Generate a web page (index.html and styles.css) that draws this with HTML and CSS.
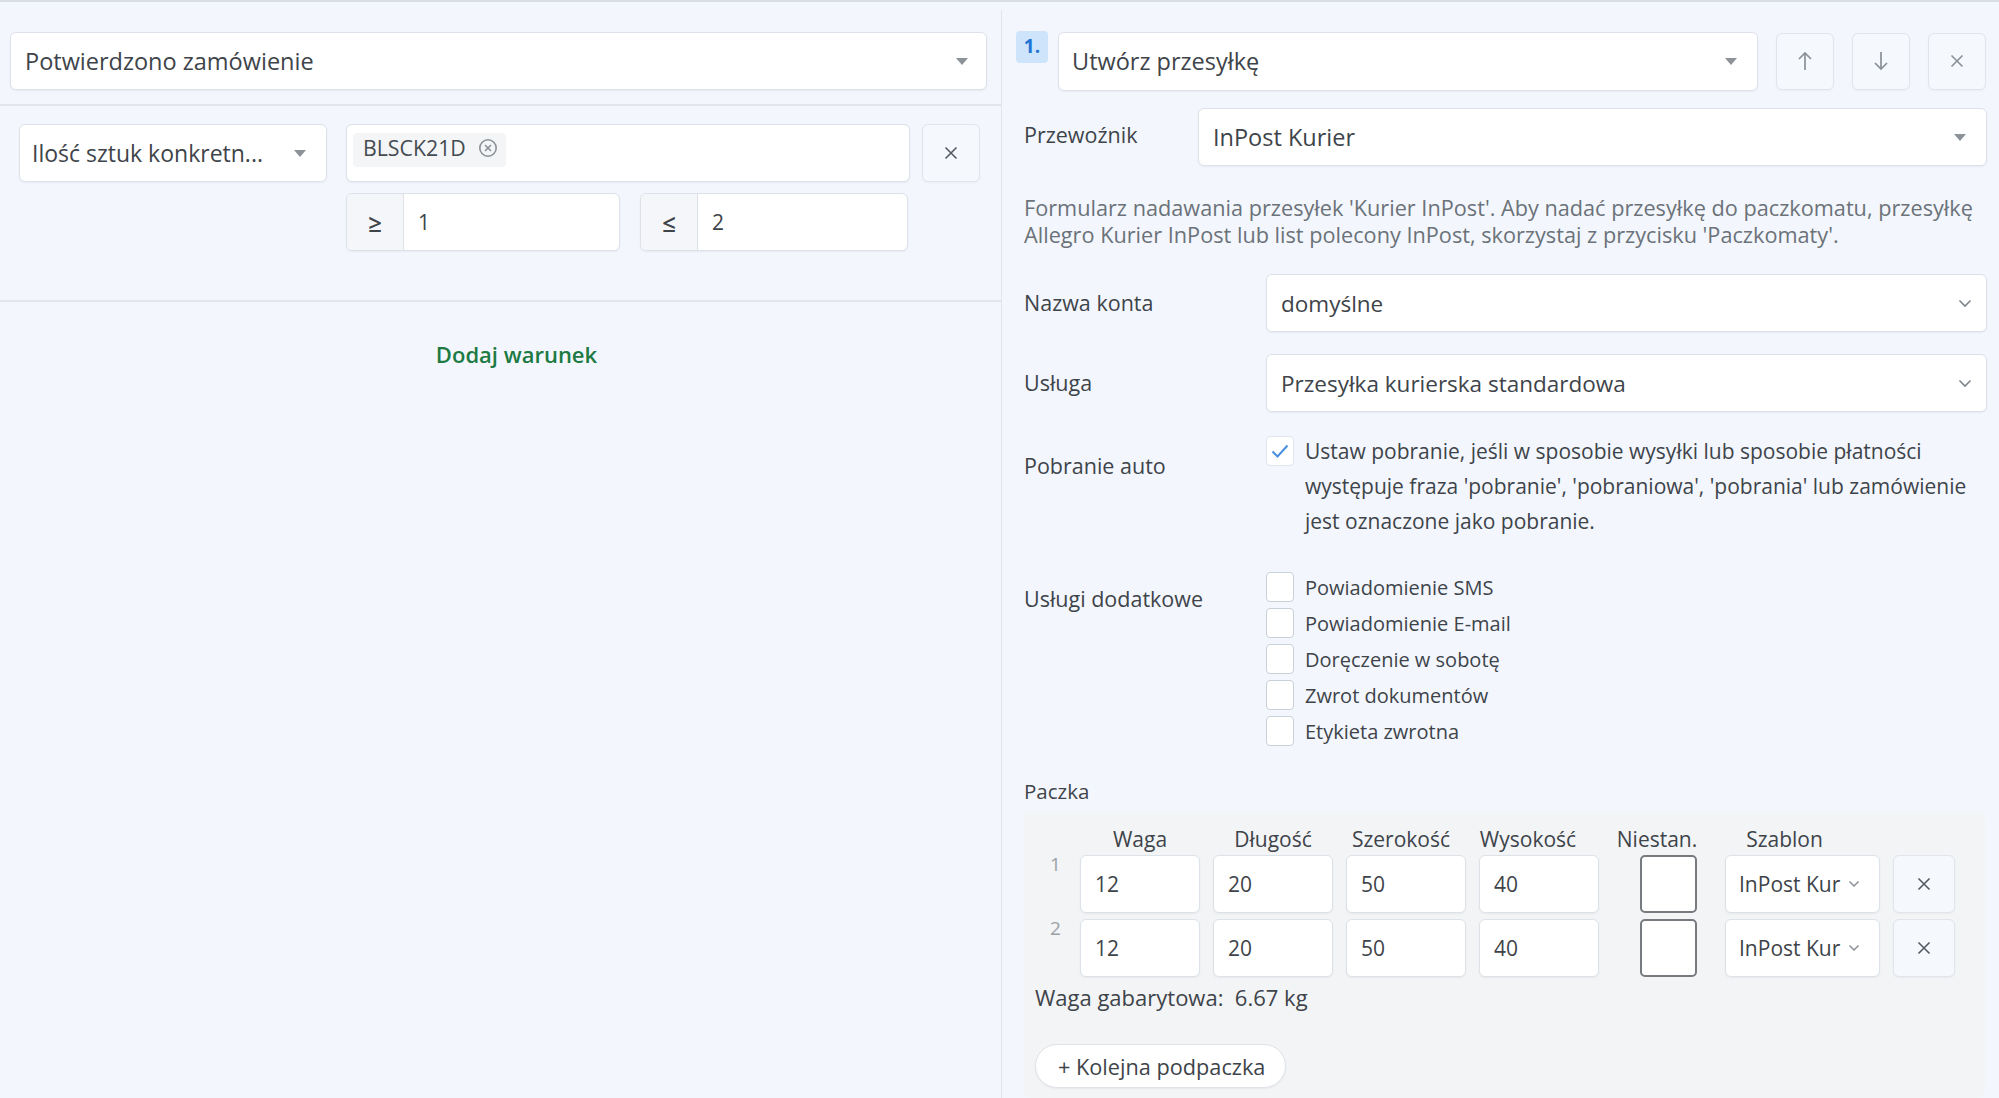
FILE: index.html
```html
<!DOCTYPE html>
<html lang="pl">
<head>
  <meta charset="UTF-8">
  <title>Automatyzacja</title>
  <link rel="stylesheet" href="styles.css">
</head>
<body>
<div class="page">

  <!-- Warunki -->
  <section class="conditions">
    <div class="trigger">
      <div class="select select-lg">
        <span>Potwierdzono zamówienie</span>
        <svg class="caret" width="12" height="7" viewBox="0 0 12 7"><path d="M0 0h12L6 7z"/></svg>
      </div>
    </div>

    <div class="condition">
      <div class="cond-row">
        <div class="select cond-type">
          <span>Ilość sztuk konkretn...</span>
          <svg class="caret" width="12" height="7" viewBox="0 0 12 7"><path d="M0 0h12L6 7z"/></svg>
        </div>
        <div class="tag-input">
          <span class="tag">BLSCK21D
            <svg width="20" height="20" viewBox="0 0 20 20" fill="none" stroke="#8a9097" stroke-width="1.6"><circle cx="10" cy="10" r="8.2"/><path d="M7 7l6 6M13 7l-6 6"/></svg>
          </span>
        </div>
        <button class="icon-btn cond-remove">
          <svg width="14" height="14" viewBox="0 0 14 14" fill="none" stroke="#555b61" stroke-width="1.6"><path d="M1.5 1.5l11 11M12.5 1.5l-11 11"/></svg>
        </button>
      </div>
      <div class="range-row">
        <div class="input-group range-min"><span class="addon">≥</span><span class="value">1</span></div>
        <div class="input-group range-max"><span class="addon">≤</span><span class="value">2</span></div>
      </div>
    </div>

    <div class="add-cond"><a href="#">Dodaj warunek</a></div>
  </section>

  <!-- Akcje -->
  <section class="actions">
    <div class="action-head">
      <span class="step">1.</span>
      <div class="select select-lg action-type">
        <span>Utwórz przesyłkę</span>
        <svg class="caret" width="12" height="7" viewBox="0 0 12 7"><path d="M0 0h12L6 7z"/></svg>
      </div>
      <button class="icon-btn head-btn">
        <svg width="16" height="20" viewBox="0 0 16 20" fill="none" stroke="#8a9097" stroke-width="1.7"><path d="M8 19V2M2 8l6-6 6 6"/></svg>
      </button>
      <button class="icon-btn head-btn">
        <svg width="16" height="20" viewBox="0 0 16 20" fill="none" stroke="#8a9097" stroke-width="1.7"><path d="M8 1v17M2 12l6 6 6-6"/></svg>
      </button>
      <button class="icon-btn head-btn">
        <svg width="14" height="14" viewBox="0 0 14 14" fill="none" stroke="#8a9097" stroke-width="1.6"><path d="M1.5 1.5l11 11M12.5 1.5l-11 11"/></svg>
      </button>
    </div>

    <div class="action-body">
      <div class="form-row carrier-row">
        <label>Przewoźnik</label>
        <div class="select select-lg">
          <span>InPost Kurier</span>
          <svg class="caret" width="12" height="7" viewBox="0 0 12 7"><path d="M0 0h12L6 7z"/></svg>
        </div>
      </div>

      <p class="hint">Formularz nadawania przesyłek 'Kurier InPost'. Aby nadać przesyłkę do paczkomatu, przesyłkę Allegro Kurier InPost lub list polecony InPost, skorzystaj z przycisku 'Paczkomaty'.</p>

      <div class="form-row account-row">
        <label>Nazwa konta</label>
        <div class="select">
          <span>domyślne</span>
          <svg class="chevron" width="14" height="9" viewBox="0 0 14 9" fill="none" stroke="#7d848b" stroke-width="1.6"><path d="M1.5 1.5l5.5 5.5 5.5-5.5"/></svg>
        </div>
      </div>

      <div class="form-row">
        <label>Usługa</label>
        <div class="select">
          <span>Przesyłka kurierska standardowa</span>
          <svg class="chevron" width="14" height="9" viewBox="0 0 14 9" fill="none" stroke="#7d848b" stroke-width="1.6"><path d="M1.5 1.5l5.5 5.5 5.5-5.5"/></svg>
        </div>
      </div>

      <div class="form-row top cod-row">
        <label>Pobranie auto</label>
        <div class="check-item">
          <span class="checkbox checked">
            <svg width="18" height="14" viewBox="0 0 18 14" fill="none" stroke="#4a8fe0" stroke-width="2"><path d="M1.5 7.5l5 5L16.5 1.5"/></svg>
          </span>
          <span class="check-text">Ustaw pobranie, jeśli w sposobie wysyłki lub sposobie płatności występuje fraza 'pobranie', 'pobraniowa', 'pobrania' lub zamówienie jest oznaczone jako pobranie.</span>
        </div>
      </div>

      <div class="form-row top extras">
        <label>Usługi dodatkowe</label>
        <div class="check-list">
          <div class="check-item"><span class="checkbox"></span><span class="check-text">Powiadomienie SMS</span></div>
          <div class="check-item"><span class="checkbox"></span><span class="check-text">Powiadomienie E-mail</span></div>
          <div class="check-item"><span class="checkbox"></span><span class="check-text">Doręczenie w sobotę</span></div>
          <div class="check-item"><span class="checkbox"></span><span class="check-text">Zwrot dokumentów</span></div>
          <div class="check-item"><span class="checkbox"></span><span class="check-text">Etykieta zwrotna</span></div>
        </div>
      </div>

      <div class="parcel-label">Paczka</div>
      <div class="parcel-box">
        <div class="parcel-grid">
          <span></span>
          <span class="th">Waga</span>
          <span class="th">Długość</span>
          <span class="th th-w">Szerokość</span>
          <span class="th th-h">Wysokość</span>
          <span class="th th-w">Niestan.</span>
          <span class="th th-tpl">Szablon</span>
          <span></span>

          <span class="nr">1</span>
          <span class="cell">12</span>
          <span class="cell">20</span>
          <span class="cell">50</span>
          <span class="cell">40</span>
          <span class="big-check"></span>
          <span class="cell tpl">InPost Kur<svg width="12" height="8" viewBox="0 0 12 8" fill="none" stroke="#8a9097" stroke-width="1.5"><path d="M1.5 1.5l4.5 4.5 4.5-4.5"/></svg></span>
          <button class="icon-btn row-remove"><svg width="14" height="14" viewBox="0 0 14 14" fill="none" stroke="#555b61" stroke-width="1.6"><path d="M1.5 1.5l11 11M12.5 1.5l-11 11"/></svg></button>

          <span class="nr">2</span>
          <span class="cell">12</span>
          <span class="cell">20</span>
          <span class="cell">50</span>
          <span class="cell">40</span>
          <span class="big-check"></span>
          <span class="cell tpl">InPost Kur<svg width="12" height="8" viewBox="0 0 12 8" fill="none" stroke="#8a9097" stroke-width="1.5"><path d="M1.5 1.5l4.5 4.5 4.5-4.5"/></svg></span>
          <button class="icon-btn row-remove"><svg width="14" height="14" viewBox="0 0 14 14" fill="none" stroke="#555b61" stroke-width="1.6"><path d="M1.5 1.5l11 11M12.5 1.5l-11 11"/></svg></button>
        </div>
        <div class="dim-weight">Waga gabarytowa:&nbsp; 6.67 kg</div>
        <button class="add-parcel">+ Kolejna podpaczka</button>
      </div>
    </div>
  </section>
</div>
</body>
</html>
```

FILE: styles.css
```css
body {
  margin: 0;
  font-family: "Open Sans", "Liberation Sans", sans-serif;
  color: #3e444a;
  background-color: #f3f7fd;
}

.page {
  display: grid;
  grid-template-columns: 1002px 1fr;
  min-height: 100vh;
  border-top: 2px solid #d9dee6;
  box-sizing: border-box;
}

/* shared controls */
.select {
  display: flex;
  align-items: center;
  justify-content: space-between;
  height: 58px;
  padding: 0 18px 0 14px;
  background-color: white;
  border: 1px solid #dde2e9;
  border-radius: 6px;
  box-shadow: 0 1px 2px rgba(0, 0, 0, 0.05);
  box-sizing: border-box;
  font-size: 22.5px;
  color: #3e444a;
}

.select-lg {
  font-size: 23.5px;
}

.caret {
  fill: #8c9298;
  flex-shrink: 0;
}

.chevron {
  flex-shrink: 0;
  margin-right: -4px;
}

.icon-btn {
  display: flex;
  align-items: center;
  justify-content: center;
  padding: 0;
  background-color: #f5f8fc;
  border: 1px solid #e1e5eb;
  border-radius: 6px;
  box-shadow: 0 1px 2px rgba(0, 0, 0, 0.04);
  cursor: pointer;
  box-sizing: border-box;
}

/* left column */
.conditions {
  border-right: 1px solid #e1e5eb;
  margin-top: 8px;
}

.trigger {
  padding: 22px 14px 14px 10px;
  border-bottom: 2px solid #e2e6ec;
}

.condition {
  padding: 18px 0 49px 19px;
  border-bottom: 2px solid #e2e6ec;
}

.cond-row {
  display: flex;
  height: 58px;
}

.cond-type {
  width: 308px;
  padding-left: 12px;
  padding-right: 20px;
  font-size: 23px;
}

.tag-input {
  width: 564px;
  margin-left: 19px;
  padding: 8px 6px;
  background-color: white;
  border: 1px solid #dde2e9;
  border-radius: 6px;
  box-shadow: 0 1px 2px rgba(0, 0, 0, 0.05);
  box-sizing: border-box;
}

.tag {
  display: inline-flex;
  align-items: center;
  gap: 12px;
  padding: 0 8px 5px 10px;
  background-color: #f4f5f7;
  border-radius: 4px;
  font-size: 21.3px;
  color: #454b51;
}

.cond-remove {
  width: 58px;
  margin-left: 12px;
}

.range-row {
  display: flex;
  gap: 20px;
  margin-top: 11px;
  padding-left: 327px;
}

.input-group {
  display: flex;
  height: 58px;
  background-color: white;
  border: 1px solid #dde2e9;
  border-radius: 6px;
  box-shadow: 0 1px 2px rgba(0, 0, 0, 0.05);
  box-sizing: border-box;
  overflow: hidden;
  font-size: 21px;
}

.range-min { width: 274px; }
.range-max { width: 268px; }

.addon {
  display: flex;
  align-items: center;
  justify-content: center;
  width: 56px;
  background-color: #f4f6f9;
  border-right: 1px solid #dde2e9;
  font-size: 24px;
  font-weight: 600;
  color: #3e444a;
}

.value {
  display: flex;
  align-items: center;
  padding-left: 14px;
}

.add-cond {
  padding: 37px 0 0 32px;
  text-align: center;
}

.add-cond a {
  font-size: 22px;
  font-weight: 600;
  color: #1d7a43;
  text-decoration: none;
}

/* right column */
.actions {
  padding: 29px 12px 0 14px;
  border-left: 1px solid #e1e5eb;
  margin-top: 8px;
  margin-left: -1px;
}

.action-head {
  display: flex;
  align-items: center;
  height: 60px;
  margin-top: -8px;
}

.step {
  align-self: flex-start;
  width: 32px;
  height: 32px;
  line-height: 30px;
  text-align: center;
  background-color: #cde4fb;
  border-radius: 4px;
  color: #1f74d6;
  font-size: 19px;
  font-weight: 700;
}

.action-type {
  width: 700px;
  height: 59px;
  margin-left: 10px;
  margin-right: 18px;
  padding-left: 13px;
  padding-right: 20px;
}

.head-btn {
  width: 58px;
  height: 57px;
  margin-right: 18px;
}

.head-btn:last-child {
  margin-right: 0;
}

.action-body {
  padding-left: 8px;
}

.form-row {
  display: grid;
  grid-template-columns: 242px 1fr;
  align-items: center;
  margin-top: 22px;
}

.form-row label {
  font-size: 21.5px;
  line-height: 28px;
}

.carrier-row {
  grid-template-columns: 174px 1fr;
  margin-top: 17px;
}

.carrier-row label {
  margin-top: -4px;
}

.carrier-row .select {
  padding-right: 20px;
}

.hint {
  margin: 28px 0 0;
  font-size: 21.7px;
  line-height: 27px;
  color: #6b7279;
}

.account-row {
  margin-top: 26px;
}

.form-row.top {
  align-items: start;
}

.form-row.top label {
  padding-top: 16px;
}

.cod-row {
  margin-top: 24px;
}

.check-item {
  display: flex;
  align-items: flex-start;
  gap: 11px;
}

.checkbox {
  display: flex;
  align-items: center;
  justify-content: center;
  flex-shrink: 0;
  width: 28px;
  height: 30px;
  background-color: white;
  border: 1px solid #c9d0d8;
  border-radius: 4px;
  box-sizing: border-box;
}

.checkbox.checked {
  border-color: #e1e6ec;
}

.check-text {
  font-size: 21px;
  line-height: 35px;
  margin-top: -2px;
}

.extras {
  margin-top: 30px;
}

.check-list .check-item {
  height: 36px;
  align-items: center;
}

.check-list .check-text {
  margin-top: 0;
  font-size: 20px;
}

.parcel-label {
  margin-top: 28px;
  font-size: 20.5px;
  line-height: 28px;
}

.parcel-box {
  margin-top: 7px;
  margin-right: 2px;
  padding: 13px 0 10px 11px;
  background-color: #f3f4f6;
  border-radius: 6px;
}

.parcel-grid {
  display: grid;
  grid-template-columns: 23px 120px 120px 120px 120px 100px 155px 62px;
  grid-auto-rows: 58px;
  grid-template-rows: 24px;
  column-gap: 13px;
  row-gap: 6px;
  padding-left: 9px;
}

.th {
  font-size: 21px;
  line-height: 28px;
  text-align: center;
  color: #3e444a;
}

.th-w { margin-right: 10px; }
.th-h { margin-right: 22px; }
.th-tpl { margin-right: 36px; }

.nr {
  margin-top: -4px;
  text-align: center;
  font-size: 19px;
  color: #9aa0a6;
}

.cell {
  display: flex;
  align-items: center;
  padding-left: 14px;
  background-color: white;
  border: 1px solid #dde2e9;
  border-radius: 6px;
  box-shadow: 0 1px 2px rgba(0, 0, 0, 0.05);
  font-size: 21px;
  color: #3e444a;
}

.tpl {
  gap: 8px;
  padding-left: 13px;
  overflow: hidden;
}

.big-check {
  justify-self: center;
  width: 57px;
  margin-left: 12px;
  background-color: white;
  border: 2px solid #777b80;
  border-radius: 5px;
  box-sizing: border-box;
}

.row-remove {
  height: 58px;
}

.dim-weight {
  margin-top: 6px;
  font-size: 22px;
  line-height: 28px;
}

.add-parcel {
  margin-top: 33px;
  height: 44px;
  padding: 0 20px 0 22px;
  background-color: white;
  border: 1px solid #dfe3e8;
  border-radius: 22px;
  box-shadow: 0 1px 2px rgba(0, 0, 0, 0.05);
  font-family: inherit;
  font-size: 21.7px;
  color: #3e444a;
  cursor: pointer;
}
```
